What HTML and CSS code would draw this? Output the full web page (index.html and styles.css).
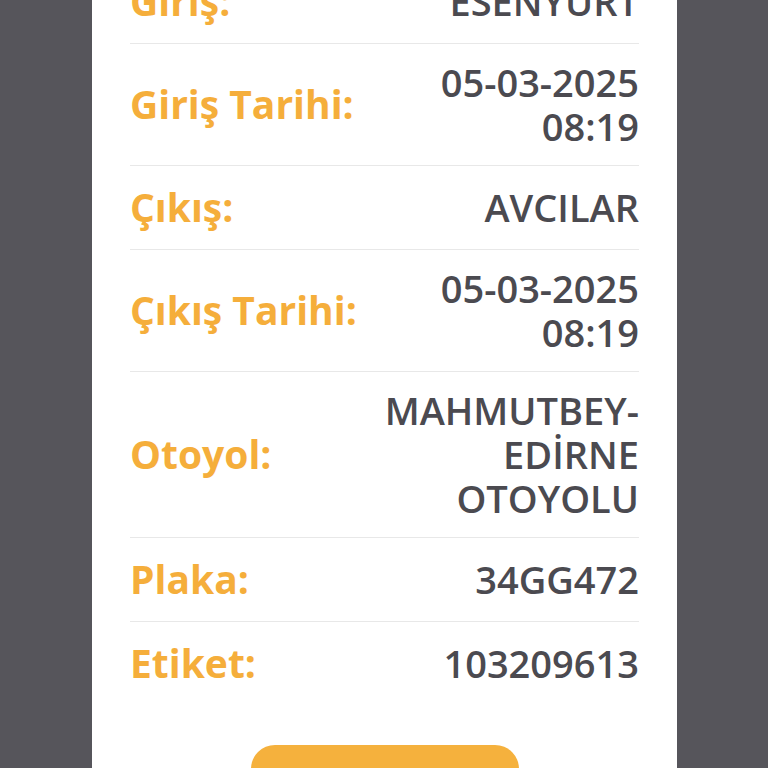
FILE: index.html
```html
<!DOCTYPE html>
<html lang="tr">
<head>
  <meta charset="UTF-8" />
  <meta name="viewport" content="width=device-width, initial-scale=1.0"/>
  <title>Geçiş Detayı</title>
  <link rel="stylesheet" href="styles.css">
</head>
<body>
  <div class="overlay">
    <div class="modal">
      <div class="row">
        <span class="label">Giriş:</span>
        <span class="value">ESENYURT</span>
      </div>
      <div class="row">
        <span class="label">Giriş Tarihi:</span>
        <span class="value">05-03-2025 08:19</span>
      </div>
      <div class="row">
        <span class="label">Çıkış:</span>
        <span class="value">AVCILAR</span>
      </div>
      <div class="row">
        <span class="label">Çıkış Tarihi:</span>
        <span class="value">05-03-2025 08:19</span>
      </div>
      <div class="row">
        <span class="label">Otoyol:</span>
        <span class="value">MAHMUTBEY-EDİRNE OTOYOLU</span>
      </div>
      <div class="row">
        <span class="label">Plaka:</span>
        <span class="value">34GG472</span>
      </div>
      <div class="row last">
        <span class="label">Etiket:</span>
        <span class="value">103209613</span>
      </div>
      <div class="actions">
        <button class="ok-button">Tamam</button>
      </div>
    </div>
  </div>
</body>
</html>
```
FILE: styles.css
```css
html, body {
  margin: 0;
  padding: 0;
  height: 100%;
}

body {
  background: #56555b;
  font-family: "Open Sans", "Liberation Sans", sans-serif;
  overflow: hidden;
}

.overlay {
  height: 768px;
  overflow: hidden;
}

.modal {
  background: #ffffff;
  width: 509px;
  margin-left: 92px;
  margin-top: -40px;
  padding: 0 38px;
}

.row {
  display: flex;
  justify-content: space-between;
  align-items: center;
  padding: 16px 0 17px;
  border-bottom: 1px solid #e8e8e8;
}

.row.last {
  border-bottom: none;
}

.label {
  color: #f5ae3b;
  font-size: 39px;
  font-weight: 700;
  line-height: 50px;
  white-space: nowrap;
}

.value {
  color: #4b4a50;
  font-size: 38px;
  font-weight: 600;
  line-height: 44px;
  text-align: right;
  max-width: 262px;
}

.actions {
  display: flex;
  justify-content: center;
  padding-top: 40px;
  padding-bottom: 30px;
}

.ok-button {
  width: 268px;
  height: 90px;
  background: #f5b13d;
  color: #ffffff;
  border: none;
  border-radius: 24px;
  font-family: inherit;
  font-size: 30px;
  font-weight: 700;
}
```
